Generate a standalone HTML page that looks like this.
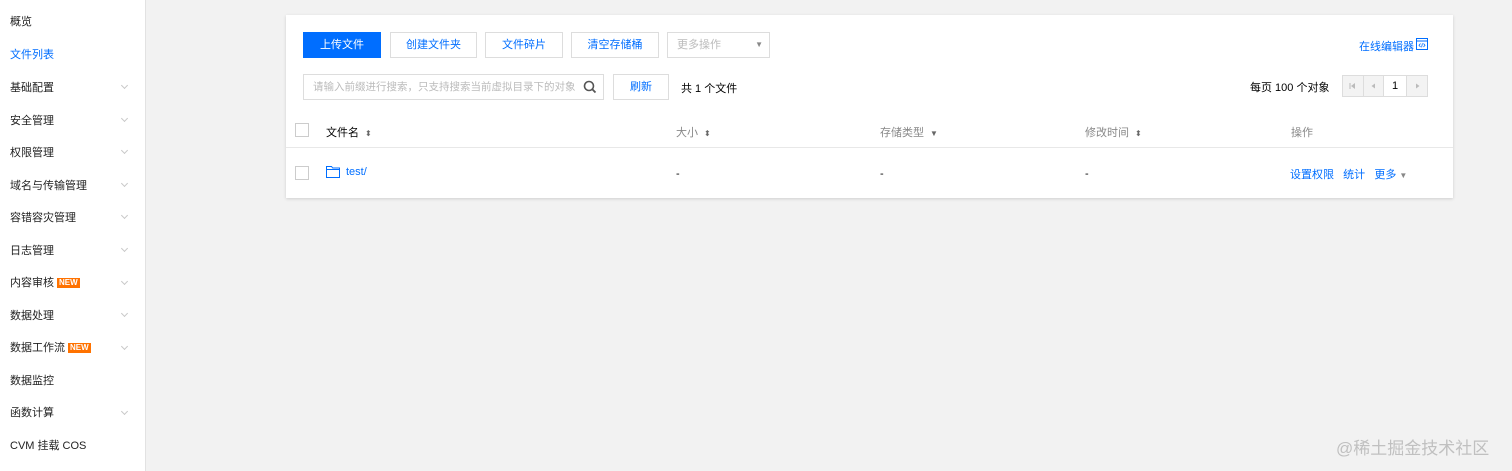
<!DOCTYPE html>
<html><head><meta charset="utf-8"><style>
*{margin:0;padding:0;box-sizing:border-box}
body{width:1512px;height:471px;background:#f2f2f2;font-family:"Liberation Sans","Noto Sans CJK SC",sans-serif;font-size:12px;color:#000;position:relative;overflow:hidden}
.a{position:absolute;white-space:nowrap}
#side{position:absolute;left:0;top:0;width:146px;height:471px;background:#fff;border-right:1px solid #e2e2e2}
.mi{position:absolute;left:10px;font-size:11px;color:#222;line-height:14px}
.chev{position:absolute;left:122px;width:5px;height:5px;border-right:1px solid #c8c8c8;border-bottom:1px solid #c8c8c8;transform:rotate(45deg)}
.new{background:#ff7200;color:#fff;font-size:8px;font-weight:bold;padding:0 2px;margin-left:3px;line-height:10px;display:inline-block;vertical-align:1px}
#card{position:absolute;left:286px;top:15px;width:1167px;height:183px;background:#fff;box-shadow:0 1px 3px rgba(0,0,0,.15)}
.btn{position:absolute;height:26px;border:1px solid #ddd;background:#fff;color:#006eff;font-size:11px;text-align:center;line-height:24px;overflow:hidden;white-space:nowrap}
.cb{position:absolute;width:14px;height:14px;border:1px solid #ccc;background:#fff}
.th{position:absolute;color:#888;font-size:11px}
.sort{color:#666;font-size:8px;margin-left:6px}
.lnk{color:#006eff}
.pg{position:absolute;top:0;height:20px;border-right:1px solid #ddd;background:#f3f3f3}
</style></head><body>
<div id="side">
<div class="mi" style="top:15px">概览</div>
<div class="mi" style="top:48px;color:#006eff">文件列表</div>
<div class="mi" style="top:81px">基础配置</div><div class="chev" style="top:83px"></div>
<div class="mi" style="top:114px">安全管理</div><div class="chev" style="top:116px"></div>
<div class="mi" style="top:146px">权限管理</div><div class="chev" style="top:148px"></div>
<div class="mi" style="top:179px">域名与传输管理</div><div class="chev" style="top:181px"></div>
<div class="mi" style="top:211px">容错容灾管理</div><div class="chev" style="top:213px"></div>
<div class="mi" style="top:244px">日志管理</div><div class="chev" style="top:246px"></div>
<div class="mi" style="top:276px">内容审核<span class="new">NEW</span></div><div class="chev" style="top:279px"></div>
<div class="mi" style="top:309px">数据处理</div><div class="chev" style="top:311px"></div>
<div class="mi" style="top:341px">数据工作流<span class="new">NEW</span></div><div class="chev" style="top:344px"></div>
<div class="mi" style="top:374px">数据监控</div>
<div class="mi" style="top:406px">函数计算</div><div class="chev" style="top:409px"></div>
<div class="mi" style="top:439px">CVM 挂载 COS</div>
</div>
<div id="card">
<div class="btn" style="left:17px;top:17px;width:78px;background:#006eff;border-color:#006eff;color:#fff">上传文件</div>
<div class="btn" style="left:104px;top:17px;width:87px">创建文件夹</div>
<div class="btn" style="left:199px;top:17px;width:78px">文件碎片</div>
<div class="btn" style="left:285px;top:17px;width:88px">清空存储桶</div>
<div class="btn" style="left:381px;top:17px;width:103px;color:#bbb;text-align:left;padding-left:9px">更多操作<span style="position:absolute;right:6px;top:0;color:#888;font-size:8px">▼</span></div>
<div class="btn" style="left:17px;top:59px;width:301px;color:#bbb;text-align:left;padding-left:9px;font-size:10.5px"><span style="display:inline-block;width:262px;overflow:hidden;vertical-align:top">请输入前缀进行搜索，只支持搜索当前虚拟目录下的对象</span>
<svg style="position:absolute;right:6px;top:5px;background:#fff" width="14" height="14" viewBox="0 0 14 14"><circle cx="6" cy="6" r="4.5" fill="none" stroke="#555" stroke-width="1.6"/><path d="M9.3 9.3L12.5 12.5" stroke="#555" stroke-width="1.8"/></svg></div>
<div class="btn" style="left:327px;top:59px;width:56px">刷新</div>
<div class="a" style="left:395px;top:65px;font-size:11px">共 1 个文件</div>
<div class="a lnk" style="left:1073px;top:23px;font-size:11px">在线编辑器</div>
<svg class="a" style="left:1130px;top:23px" width="12" height="12" viewBox="0 0 12 12"><rect x=".5" y=".5" width="11" height="11" fill="none" stroke="#006eff"/><path d="M.5 3h11" stroke="#006eff"/><path d="M4.5 5.5L3 7.3l1.5 1.7M7.5 5.5L9 7.3 7.5 9M6.4 5.3l-.8 4" stroke="#006eff" stroke-width=".8" fill="none"/></svg>
<div class="a" style="left:964px;top:64px;font-size:11px">每页 100 个对象</div>
<div class="a" style="left:1056px;top:60px;width:86px;height:22px;border:1px solid #ddd;overflow:hidden">
<div class="pg" style="left:0;width:21px"><svg width="20" height="20"><path d="M7 7v6" stroke="#bbb"/><path d="M12 7l-4 3 4 3z" fill="#bbb"/></svg></div>
<div class="pg" style="left:21px;width:20px"><svg width="19" height="20"><path d="M11 7.5l-3.5 2.5 3.5 2.5z" fill="#bbb"/></svg></div>
<div class="pg" style="left:41px;width:23px;background:#fff;color:#000;font-size:11px;text-align:center;line-height:20px">1</div>
<div class="pg" style="left:64px;width:21px;border:none"><svg width="20" height="20"><path d="M9 7.5l3.5 2.5L9 12.5z" fill="#bbb"/></svg></div>
</div>
<div class="cb" style="left:9px;top:108px"></div>
<div class="th" style="left:40px;top:109px;color:#000">文件名<span class="sort">⬍</span></div>
<div class="th" style="left:390px;top:109px">大小<span class="sort">⬍</span></div>
<div class="th" style="left:594px;top:109px">存储类型<span class="sort">▼</span></div>
<div class="th" style="left:799px;top:109px">修改时间<span class="sort">⬍</span></div>
<div class="th" style="left:1005px;top:109px">操作</div>
<div class="a" style="left:0;top:132px;width:1167px;height:1px;background:#e8e8e8"></div>
<div class="cb" style="left:9px;top:151px"></div>
<svg class="a" style="left:40px;top:151px" width="14" height="12" viewBox="0 0 14 12"><path d="M.5 .5h5l1.2 1.5h6.8v9.5H.5z M.5 3.5h13" fill="none" stroke="#006eff"/></svg>
<div class="a lnk" style="left:60px;top:151px;font-size:11px">test/</div>
<div class="a" style="left:390px;top:153px;font-size:11px">-</div>
<div class="a" style="left:594px;top:153px;font-size:11px">-</div>
<div class="a" style="left:799px;top:153px;font-size:11px">-</div>
<div class="a lnk" style="left:1004px;top:151px;font-size:11px">设置权限&nbsp;&nbsp;&nbsp;统计&nbsp;&nbsp;&nbsp;更多 <span style="color:#888;font-size:8px">▼</span></div>
</div>
<div class="a" style="left:1336px;top:434px;font-size:17px;color:#c0c0c0">@稀土掘金技术社区</div>
</body></html>
